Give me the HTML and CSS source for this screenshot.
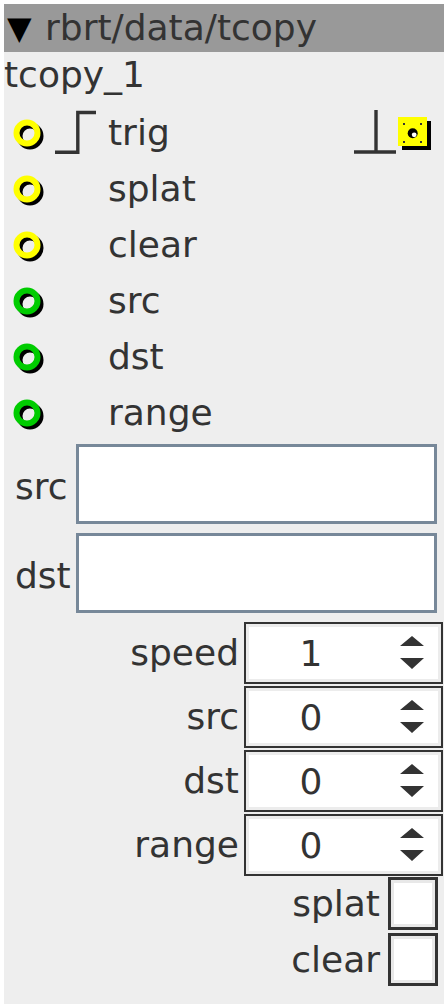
FILE: index.html
```html
<!DOCTYPE html>
<html>
<head>
<meta charset="utf-8">
<link rel="stylesheet" href="styles.css">
</head>
<body>
<div class="panel">
  <div class="header"><span class="tri">▼</span><span class="path">rbrt/data/tcopy</span></div>
  <div class="title">tcopy_1</div>

  <div class="ports">
    <div class="port-row">
      <svg class="port" width="48" height="56" viewBox="0 0 48 56"><circle cx="26" cy="31" r="10.5" fill="none" stroke="#000" stroke-width="6"/><circle cx="23" cy="28" r="10.5" fill="none" stroke="#ffff00" stroke-width="6"/></svg>
      <svg class="edge" width="48" height="56" viewBox="0 0 48 56"><path d="M3 47.3 H25.8 V7.5 H44" fill="none" stroke="#333" stroke-width="3.4"/></svg>
      <span class="port-label">trig</span>
      <svg class="trig-mode" width="84" height="56" viewBox="0 0 84 56">
        <path d="M24 5 V47 M2 47 H44" fill="none" stroke="#333" stroke-width="3.4"/>
        <rect x="50" y="16" width="29" height="29" fill="#000"/>
        <rect x="46" y="12" width="29" height="29" fill="#ffff00"/>
        <circle cx="60.7" cy="28.3" r="5" fill="#000"/>
        <circle cx="62.2" cy="29.8" r="2.4" fill="#fff"/>
        <rect x="51" y="18" width="2" height="2" fill="#333"/>
        <rect x="68" y="18" width="2" height="2" fill="#333"/>
        <rect x="51" y="36" width="2" height="2" fill="#333"/>
        <rect x="68" y="36" width="2" height="2" fill="#333"/>
      </svg>
    </div>
    <div class="port-row">
      <svg class="port" width="48" height="56" viewBox="0 0 48 56"><circle cx="26" cy="31" r="10.5" fill="none" stroke="#000" stroke-width="6"/><circle cx="23" cy="28" r="10.5" fill="none" stroke="#ffff00" stroke-width="6"/></svg>
      <span class="edge-space"></span>
      <span class="port-label">splat</span>
    </div>
    <div class="port-row">
      <svg class="port" width="48" height="56" viewBox="0 0 48 56"><circle cx="26" cy="31" r="10.5" fill="none" stroke="#000" stroke-width="6"/><circle cx="23" cy="28" r="10.5" fill="none" stroke="#ffff00" stroke-width="6"/></svg>
      <span class="edge-space"></span>
      <span class="port-label">clear</span>
    </div>
    <div class="port-row">
      <svg class="port" width="48" height="56" viewBox="0 0 48 56"><circle cx="26" cy="31" r="10.5" fill="none" stroke="#000" stroke-width="6"/><circle cx="23" cy="28" r="10.5" fill="none" stroke="#00cc00" stroke-width="6"/></svg>
      <span class="edge-space"></span>
      <span class="port-label">src</span>
    </div>
    <div class="port-row">
      <svg class="port" width="48" height="56" viewBox="0 0 48 56"><circle cx="26" cy="31" r="10.5" fill="none" stroke="#000" stroke-width="6"/><circle cx="23" cy="28" r="10.5" fill="none" stroke="#00cc00" stroke-width="6"/></svg>
      <span class="edge-space"></span>
      <span class="port-label">dst</span>
    </div>
    <div class="port-row">
      <svg class="port" width="48" height="56" viewBox="0 0 48 56"><circle cx="26" cy="31" r="10.5" fill="none" stroke="#000" stroke-width="6"/><circle cx="23" cy="28" r="10.5" fill="none" stroke="#00cc00" stroke-width="6"/></svg>
      <span class="edge-space"></span>
      <span class="port-label">range</span>
    </div>
  </div>

  <div class="fields">
    <div class="field-row"><span class="field-label">src</span><div class="field-box"></div></div>
    <div class="field-row"><span class="field-label">dst</span><div class="field-box"></div></div>
  </div>

  <div class="nums">
    <div class="num-row"><span class="num-label">speed</span><div class="num-box"><span class="num-val">1</span><svg class="spin" width="24" height="34" viewBox="0 0 24 34"><path d="M0 10 L12 0 L24 10 Z M0 22 H24 L12 33 Z" fill="#333"/></svg></div></div>
    <div class="num-row"><span class="num-label">src</span><div class="num-box"><span class="num-val">0</span><svg class="spin" width="24" height="34" viewBox="0 0 24 34"><path d="M0 10 L12 0 L24 10 Z M0 22 H24 L12 33 Z" fill="#333"/></svg></div></div>
    <div class="num-row"><span class="num-label">dst</span><div class="num-box"><span class="num-val">0</span><svg class="spin" width="24" height="34" viewBox="0 0 24 34"><path d="M0 10 L12 0 L24 10 Z M0 22 H24 L12 33 Z" fill="#333"/></svg></div></div>
    <div class="num-row"><span class="num-label">range</span><div class="num-box"><span class="num-val">0</span><svg class="spin" width="24" height="34" viewBox="0 0 24 34"><path d="M0 10 L12 0 L24 10 Z M0 22 H24 L12 33 Z" fill="#333"/></svg></div></div>
  </div>

  <div class="checks">
    <div class="check-row"><span class="check-label">splat</span><div class="check-box"></div></div>
    <div class="check-row"><span class="check-label">clear</span><div class="check-box"></div></div>
  </div>
</div>
</body>
</html>
```

FILE: styles.css
```css
html, body {
  margin: 0;
  padding: 0;
  background: #ffffff;
}
body {
  padding: 4px;
  font-family: "DejaVu Sans", sans-serif;
  font-size: 36px;
  color: #333333;
}
.panel {
  width: 440px;
  height: 1000px;
  background: #eeeeee;
  display: flex;
  flex-direction: column;
}
.header {
  height: 48px;
  background: #999999;
  display: flex;
  align-items: center;
  padding-left: 3px;
  line-height: 42px;
}
.tri {
  font-size: 32px;
  color: #000000;
  width: 38px;
}
.path {
  color: #333333;
}
.title {
  height: 53px;
  line-height: 42px;
  padding-top: 2px;
  box-sizing: border-box;
}
.ports {
  display: flex;
  flex-direction: column;
}
.port-row {
  height: 56px;
  display: flex;
  align-items: center;
}
.port, .edge {
  display: block;
  flex: none;
}
.edge-space {
  width: 48px;
  flex: none;
}
.port-label {
  margin-left: 8px;
  padding-bottom: 2px;
}
.trig-mode {
  display: block;
  margin-left: auto;
  margin-right: 8px;
}
.fields {
  display: flex;
  flex-direction: column;
  padding-top: 3px;
}
.field-row {
  display: flex;
  align-items: center;
  padding-bottom: 9px;
}
.field-label {
  width: 72px;
  padding-left: 11px;
  padding-top: 5px;
  box-sizing: border-box;
}
.field-box {
  flex: 1;
  height: 80px;
  margin-right: 7px;
  background: #ffffff;
  border: 3px solid #778899;
  box-sizing: border-box;
}
.nums {
  display: flex;
  flex-direction: column;
  gap: 2px;
}
.num-row {
  display: flex;
  justify-content: flex-end;
  align-items: center;
}
.num-label {
  margin-right: 5px;
  padding-bottom: 2px;
}
.num-box {
  width: 199px;
  height: 62px;
  margin-right: 1px;
  box-sizing: border-box;
  border: 2px solid #333333;
  background: #ffffff;
  box-shadow: inset 0 0 0 3px #ececec;
  display: flex;
  align-items: center;
}
.num-val {
  width: 130px;
  text-align: center;
}
.spin {
  display: block;
  margin-left: 24px;
}
.checks {
  display: flex;
  flex-direction: column;
  gap: 3px;
  padding-top: 1px;
}
.check-row {
  display: flex;
  justify-content: flex-end;
  align-items: center;
}
.check-label {
  margin-right: 8px;
}
.check-box {
  width: 50px;
  height: 53px;
  margin-right: 6px;
  box-sizing: border-box;
  border: 3px solid #333333;
  background: #ffffff;
  box-shadow: inset 0 0 0 3px #e8e8e8;
}
```
